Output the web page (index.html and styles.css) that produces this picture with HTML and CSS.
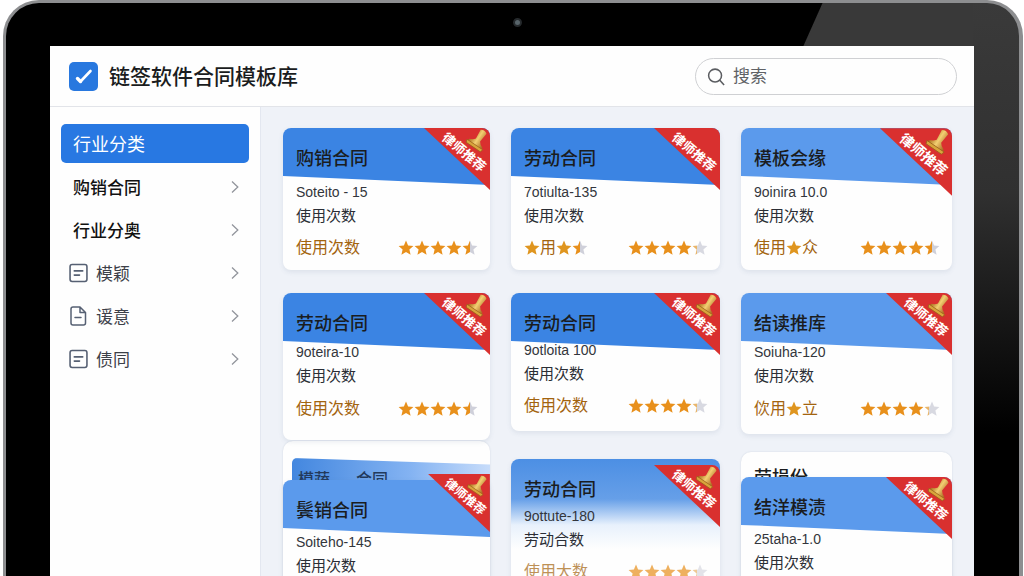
FILE: index.html
```html
<!DOCTYPE html>
<html lang="zh-CN">
<head>
<meta charset="utf-8">
<meta name="viewport" content="width=device-width, initial-scale=1">
<title>链签软件合同模板库</title>
<link rel="stylesheet" href="styles.css">
</head>
<body>
<svg class="sprite" aria-hidden="true">
  <defs>
    <linearGradient id="half"><stop offset="0.5" stop-color="#e8901c"/><stop offset="0.5" stop-color="#cfd0da"/></linearGradient>
    <linearGradient id="low"><stop offset="0.28" stop-color="#e8b56a"/><stop offset="0.28" stop-color="#d8d9e1"/></linearGradient>
    <linearGradient id="gold" x1="0" y1="0" x2="1" y2="0"><stop offset="0" stop-color="#a9701c"/><stop offset="0.45" stop-color="#f3cf72"/><stop offset="1" stop-color="#a8641c"/></linearGradient>
    <path id="star" d="M8 0.6 10.1 5.5 15.4 6 11.4 9.6 12.6 14.8 8 12.1 3.4 14.8 4.6 9.6 0.6 6 5.9 5.5Z"/>
    <symbol id="rating-half" viewBox="0 0 80 16">
      <g fill="#e8901c"><use href="#star"/><use href="#star" x="16"/><use href="#star" x="32"/><use href="#star" x="48"/></g>
      <use href="#star" x="64" fill="url(#half)"/>
    </symbol>
    <symbol id="rating-low" viewBox="0 0 80 16">
      <g fill="#e8901c"><use href="#star"/><use href="#star" x="16"/><use href="#star" x="32"/><use href="#star" x="48"/></g>
      <use href="#star" x="64" fill="url(#low)"/>
    </symbol>
    <g id="stamp" transform="translate(54 12) rotate(34)">
      <path d="M-3.500-10Q0-12.500 3.500-10L2.500 0Q4 2.500 8 4V6.500H-8V4Q-4 2.500-2.500 0Z" fill="url(#gold)"/>
      <path d="M-9.500 5.500H9.500L8.500 8.500H-8.500Z" fill="#d9a53c" stroke="#98601a" stroke-width="0.700"/>
    </g>
    <symbol id="ribbon" viewBox="0 0 66 62">
      <path d="M0 0H66V62Z" fill="#d9302f"/>
      <use href="#stamp"/>
      <text transform="translate(17 11) rotate(40)" class="ribbon-text">律师推荐</text>
    </symbol>
    <symbol id="ribbon-plain" viewBox="0 0 66 62">
      <path d="M0 0H66V62Z" fill="#d9302f"/>
      <text transform="translate(17 11) rotate(40)" class="ribbon-text">律师推荐</text>
    </symbol>
    <symbol id="chevron" viewBox="0 0 10 14"><path d="M2 1.500 7.800 7 2 12.500" fill="none" stroke="#92959c" stroke-width="1.300"/></symbol>
    <symbol id="note" viewBox="0 0 18 18"><g fill="none" stroke="#566073" stroke-width="1.500" stroke-linecap="round"><rect x="1" y="1" width="16" height="16" rx="2"/><path d="M5 7H13M5 11H10"/></g></symbol>
    <symbol id="file" viewBox="0 0 18 20"><g fill="none" stroke="#566073" stroke-width="1.500" stroke-linecap="round" stroke-linejoin="round"><path d="M3.500 1H10.500L16 6.500V17Q16 19 14 19H3.500Q1.500 19 1.500 17V3Q1.500 1 3.500 1ZM10.500 1V6.500H16M5.500 11.500H11.500"/></g></symbol>
  </defs>
</svg>
<div class="device">
  <span class="camera"></span>
  <div class="screen">
    <header class="topbar">
      <svg class="logo" viewBox="0 0 29 29" aria-hidden="true"><rect width="29" height="29" rx="5" fill="#2878df"/><path d="M8.500 16.500 11.500 19.500" fill="none" stroke="#fff" stroke-width="3.400" stroke-linecap="round"/><path d="M11.500 19.500 21.500 9" fill="none" stroke="#fff" stroke-width="2.600" stroke-linecap="round"/></svg>
      <h1 class="brand">链签软件合同模板库</h1>
      <label class="search">
        <svg class="search-icon" viewBox="0 0 20 20" aria-hidden="true"><circle cx="8.500" cy="8.500" r="6.800"/><path d="M13.500 13.500 18 18.500"/></svg>
        <input class="search-input" type="search" placeholder="搜索" aria-label="搜索">
      </label>
    </header>
    <div class="layout">
      <nav class="sidebar">
        <a class="nav-item active" href="#">行业分类</a>
        <a class="nav-item strong" href="#">购销合同<svg class="chevron"><use href="#chevron"/></svg></a>
        <a class="nav-item strong" href="#">行业分奥<svg class="chevron"><use href="#chevron"/></svg></a>
        <a class="nav-item sub" href="#"><svg class="nav-icon"><use href="#note"/></svg>模颖<svg class="chevron"><use href="#chevron"/></svg></a>
        <a class="nav-item sub" href="#"><svg class="nav-icon"><use href="#file"/></svg>谖意<svg class="chevron"><use href="#chevron"/></svg></a>
        <a class="nav-item sub" href="#"><svg class="nav-icon"><use href="#note"/></svg>债同<svg class="chevron"><use href="#chevron"/></svg></a>
      </nav>
      <main class="board">
        <section class="column">
          <article class="card">
            <h2 class="card-title">购销合同</h2>
            <svg class="ribbon"><use href="#ribbon"/></svg>
            <div class="card-body">
              <p class="code">Soteito - 15</p>
              <p class="usage">使用次数</p>
              <div class="card-foot"><span>使用次数</span><svg class="rating" role="img" aria-label="4.5"><use href="#rating-half"/></svg></div>
            </div>
          </article>
          <article class="card compact tall">
            <h2 class="card-title">劳动合同</h2>
            <svg class="ribbon"><use href="#ribbon"/></svg>
            <div class="card-body">
              <p class="code">9oteira-10</p>
              <p class="usage">使用次数</p>
              <div class="card-foot"><span>使用次数</span><svg class="rating" role="img" aria-label="4.5"><use href="#rating-half"/></svg></div>
            </div>
          </article>
          <div class="stack stack-band">
            <div class="peek peek-band"><span>模蔬</span><span>合同</span></div>
            <article class="card light raised">
              <h2 class="card-title">鬓销合同</h2>
              <svg class="ribbon"><use href="#ribbon"/></svg>
              <div class="card-body">
                <p class="code">Soiteho-145</p>
                <p class="usage">使用次数</p>
              </div>
            </article>
          </div>
        </section>
        <section class="column">
          <article class="card">
            <h2 class="card-title">劳动合同</h2>
            <svg class="ribbon"><use href="#ribbon-plain"/></svg>
            <div class="card-body">
              <p class="code">7otiulta-135</p>
              <p class="usage">使用次数</p>
              <div class="card-foot"><span class="star-label"><svg class="star" viewBox="0 0 16 16"><use href="#star"/></svg>用<svg class="star" viewBox="0 0 16 16"><use href="#star"/></svg><svg class="star" viewBox="0 0 16 16"><use href="#star" fill="url(#half)"/></svg></span><svg class="rating" role="img" aria-label="4.2"><use href="#rating-low"/></svg></div>
            </div>
          </article>
          <article class="card compact short">
            <h2 class="card-title">劳动合同</h2>
            <svg class="ribbon"><use href="#ribbon"/></svg>
            <div class="card-body">
              <p class="code">9otloita 100</p>
              <p class="usage">使用次数</p>
              <div class="card-foot"><span>使用次数</span><svg class="rating" role="img" aria-label="4.2"><use href="#rating-low"/></svg></div>
            </div>
          </article>
          <article class="card compact short fade">
            <h2 class="card-title">劳动合同</h2>
            <svg class="ribbon"><use href="#ribbon"/></svg>
            <div class="card-body">
              <p class="code">9ottute-180</p>
              <p class="usage">劳动合数</p>
              <div class="card-foot"><span>使用大数</span><svg class="rating" role="img" aria-label="4.2"><use href="#rating-low"/></svg></div>
            </div>
          </article>
        </section>
        <section class="column">
          <article class="card light">
            <h2 class="card-title">模板会缘</h2>
            <svg class="ribbon ribbon-large"><use href="#ribbon"/></svg>
            <div class="card-body">
              <p class="code">9oinira 10.0</p>
              <p class="usage">使用次数</p>
              <div class="card-foot"><span class="star-label">使用<svg class="star" viewBox="0 0 16 16"><use href="#star"/></svg>众</span><svg class="rating" role="img" aria-label="4.5"><use href="#rating-half"/></svg></div>
            </div>
          </article>
          <article class="card compact light">
            <h2 class="card-title">结读推库</h2>
            <svg class="ribbon"><use href="#ribbon"/></svg>
            <div class="card-body">
              <p class="code">Soiuha-120</p>
              <p class="usage">使用次数</p>
              <div class="card-foot"><span class="star-label">佽用<svg class="star" viewBox="0 0 16 16"><use href="#star"/></svg>立</span><svg class="rating" role="img" aria-label="4.2"><use href="#rating-low"/></svg></div>
            </div>
          </article>
          <div class="stack">
            <div class="peek">劳损份</div>
            <article class="card light">
              <h2 class="card-title">结洋模渍</h2>
              <svg class="ribbon"><use href="#ribbon"/></svg>
              <div class="card-body">
                <p class="code">25taha-1.0</p>
                <p class="usage">使用次数</p>
              </div>
            </article>
          </div>
        </section>
      </main>
    </div>
  </div>
</div>
</body>
</html>
```
FILE: styles.css
```css
* { box-sizing: border-box; }

body {
  margin: 0;
  background: #fff;
  color: #1a1c20;
  font-family: "Liberation Sans", "Noto Sans CJK SC", sans-serif;
}

h1, h2, p { margin: 0; }

.sprite { position: absolute; width: 0; height: 0; }

/* Device frame */
.device {
  position: relative;
  display: flex;
  height: 100vh;
  margin: 0 1px 0 3px;
  padding: 43px 45px 0 44px;
  overflow: hidden;
  border: solid #8d8e90;
  border-width: 3px 4px 0 3px;
  border-radius: 36px 36px 0 0;
  background:
    linear-gradient(to bottom, #3a3a3a, #303030 190px, #000 430px) right top / 46px 100% no-repeat,
    linear-gradient(114deg, transparent 21px, #393939 22px) right top / 220px 43px no-repeat,
    #000;
}

.camera {
  position: absolute;
  top: 15px;
  left: 50%;
  width: 9px;
  height: 9px;
  border: 2px solid #25292c;
  border-radius: 50%;
  background: #59656b;
}

.screen {
  display: flex;
  flex: 1;
  flex-direction: column;
  min-width: 0;
  overflow: hidden;
  background: #fefefe;
}

/* Top bar */
.topbar {
  display: flex;
  flex: none;
  align-items: center;
  padding: 12px 17px 11px 19px;
  border-bottom: 1px solid #e2e4e9;
}

.logo { width: 29px; height: 29px; }

.brand {
  margin-left: 11px;
  font-size: 21px;
  font-weight: 500;
  line-height: 30px;
  white-space: nowrap;
}

.search {
  display: flex;
  align-items: center;
  gap: 7px;
  width: 262px;
  height: 37px;
  margin-left: auto;
  padding: 0 11px;
  border: 1px solid #cfd0d3;
  border-radius: 20px;
}

.search-icon {
  flex: none;
  width: 19px;
  height: 20px;
  fill: none;
  stroke: #5b5d61;
  stroke-width: 1.6;
}

.search-input {
  width: 100%;
  padding: 0;
  border: 0;
  outline: 0;
  background: transparent;
  font: inherit;
  font-size: 17px;
}

.search-input::placeholder { color: #606266; opacity: 1; }

/* Sidebar */
.layout { display: flex; flex: 1; min-height: 0; }

.sidebar {
  display: flex;
  flex: none;
  flex-direction: column;
  gap: 4px;
  width: 211px;
  padding: 17px 11px 0;
  border-right: 1px solid #e3e7f0;
}

.nav-item {
  display: flex;
  flex: none;
  align-items: center;
  height: 39px;
  padding: 0 9px 0 12px;
  border-radius: 5px;
  color: #3c4048;
  font-size: 17px;
  text-decoration: none;
}

.nav-item.active { padding-bottom: 2px; background: #2878e2; color: #fff; font-size: 18px; }
.nav-item.strong { color: #111; font-weight: 500; }
.nav-item.sub { padding-left: 8px; }
.nav-icon { width: 19px; height: 20px; margin-right: 8px; }
.chevron { width: 10px; height: 14px; margin-left: auto; }

/* Template cards */
.board {
  display: grid;
  flex: 1;
  grid-template-columns: 207fr 209fr 211fr;
  gap: 21px;
  min-width: 0;
  padding: 21px 22px 0;
  background: #eff2f8;
}

.column { display: flex; flex-direction: column; gap: 23px; min-width: 0; }

.card {
  --band: #3b84e3;
  position: relative;
  flex: none;
  border-radius: 8px;
  background: #fefefe;
  box-shadow: 0 2px 5px #5568881f;
}

.light { --band: #5b9aec; }

.card-title {
  height: 57px;
  padding: 19px 13px 0;
  border-radius: 8px 8px 0 0;
  background: var(--band);
  clip-path: polygon(0 0, 100% 0, 100% 100%, 0 84%);
  font-size: 18px;
  font-weight: 500;
  line-height: 24px;
}

.ribbon {
  position: absolute;
  top: 0;
  right: 0;
  width: 66px;
  height: 62px;
  border-top-right-radius: 8px;
}

.ribbon-large { width: 72px; height: 68px; }

.ribbon-text {
  fill: #fff;
  font-family: "Noto Sans CJK SC", sans-serif;
  font-size: 13px;
  font-weight: 700;
}

.card-body {
  position: relative;
  margin-top: -3px;
  padding: 0 12px 10px 13px;
}

.code { font-size: 14px; line-height: 20px; color: #33363c; }
.usage { margin-top: 2px; font-size: 15px; line-height: 24px; color: #2b2e35; }

.card-foot {
  display: flex;
  align-items: center;
  justify-content: space-between;
  margin-top: 8px;
  color: #a3640f;
  font-size: 16px;
  line-height: 24px;
}

.rating { width: 80px; height: 16px; }
.star-label { display: flex; align-items: center; }
.star { width: 16px; height: 16px; fill: #df951f; }

.compact .card-body { margin-top: -8px; padding-bottom: 13px; }
.compact .card-foot { margin-top: 9px; }
.compact.tall .card-body { padding-bottom: 19px; }
.compact.short .card-body { margin-top: -10px; }
.compact.short .card-foot { margin-top: 8px; }

.fade {
  margin-top: 5px;
  background: linear-gradient(#4c8fe4, #669fe8 40px, #e8f1fc 66px, #fefefe 90px);
}
.fade .card-title { background: none; }
.fade .ribbon { top: 6px; }
.fade .card-foot { opacity: 0.7; }

/* Cards resting on top of another card */
.stack {
  margin-top: -5px;
  border-radius: 10px;
  background: #fefefe;
  box-shadow: 0 0 2px #55688833;
}

.stack .card-body { margin-top: -5px; }

.peek {
  height: 25px;
  padding: 14px 13px 0;
  overflow: hidden;
  font-size: 18px;
  font-weight: 500;
  line-height: 24px;
}

.stack-band { margin-top: -22px; padding-top: 17px; }

.peek-band {
  display: flex;
  gap: 26px;
  height: 22px;
  margin-left: 9px;
  padding: 10px 6px 0;
  border-radius: 5px 0 0;
  background: linear-gradient(90deg, #4387df, #84b3f2 60%, #c7dcfa);
  clip-path: polygon(0 0, 100% 30%, 100% 100%, 0 100%);
  color: #233a5c;
  font-size: 16px;
}

.raised .ribbon { top: -6px; width: 62px; height: 58px; border-radius: 0; }
```
